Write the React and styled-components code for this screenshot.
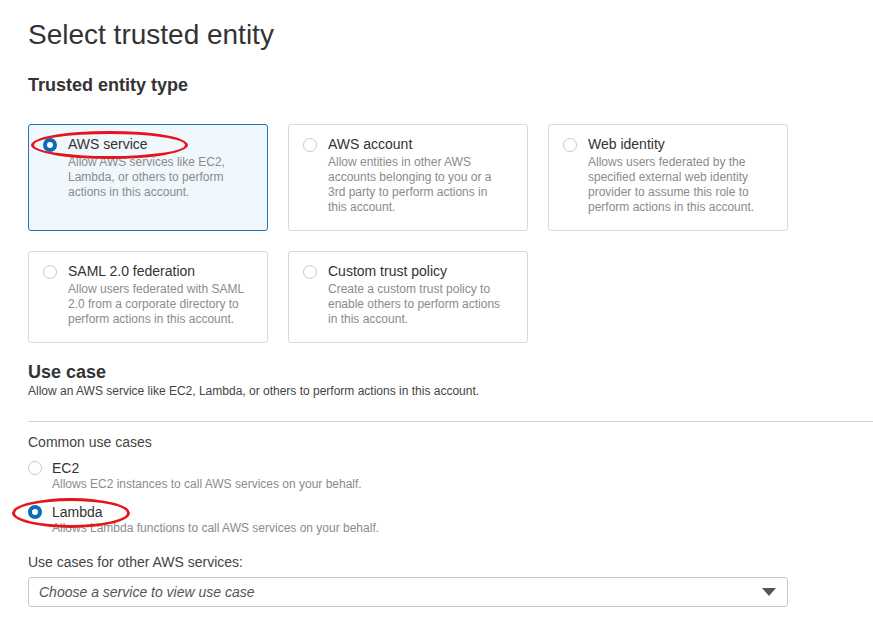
import React from "react";
import styled, { createGlobalStyle } from "styled-components";

const GlobalStyle = createGlobalStyle`
  body {
    margin: 0;
    background: #fff;
    font-family: "Liberation Sans", Arial, sans-serif;
    color: #333;
  }
  * { box-sizing: border-box; }
`;

const entityTypes = [
  {
    title: "AWS service",
    desc: "Allow AWS services like EC2, Lambda, or others to perform actions in this account.",
    checked: true,
    circled: true
  },
  {
    title: "AWS account",
    desc: "Allow entities in other AWS accounts belonging to you or a 3rd party to perform actions in this account."
  },
  {
    title: "Web identity",
    desc: "Allows users federated by the specified external web identity provider to assume this role to perform actions in this account."
  },
  {
    title: "SAML 2.0 federation",
    desc: "Allow users federated with SAML 2.0 from a corporate directory to perform actions in this account."
  },
  {
    title: "Custom trust policy",
    desc: "Create a custom trust policy to enable others to perform actions in this account."
  }
];

const useCases = [
  { title: "EC2", desc: "Allows EC2 instances to call AWS services on your behalf." },
  {
    title: "Lambda",
    desc: "Allows Lambda functions to call AWS services on your behalf.",
    checked: true,
    circled: true
  }
];

function App() {
  return (
    <>
      <GlobalStyle />
      <Page>
        <Title>Select trusted entity</Title>
        <Heading $top={23}>Trusted entity type</Heading>
        <TileGrid>
          {entityTypes.map(t => (
            <Tile key={t.title} $selected={t.checked}>
              <Radio $checked={t.checked} $top={3} />
              <div>
                <TileTitle>{t.title}</TileTitle>
                <TileDesc>{t.desc}</TileDesc>
              </div>
              {t.circled && <Circle $left={2} $top={6} $w={157} $h={28} />}
            </Tile>
          ))}
        </TileGrid>

        <Heading $top={19}>Use case</Heading>
        <Lead>Allow an AWS service like EC2, Lambda, or others to perform actions in this account.</Lead>
        <Divider />

        <Label $top={11}>Common use cases</Label>
        <OptionList>
          {useCases.map(u => (
            <Option key={u.title}>
              <Radio $checked={u.checked} $top={1} />
              <div>
                <OptionTitle>{u.title}</OptionTitle>
                <OptionDesc>{u.desc}</OptionDesc>
              </div>
              {u.circled && <Circle $left={-16} $top={-6} $w={118} $h={30} />}
            </Option>
          ))}
        </OptionList>

        <Label $top={17}>Use cases for other AWS services:</Label>
        <Select>
          <Placeholder>Choose a service to view use case</Placeholder>
          <Caret />
        </Select>
      </Page>
    </>
  );
}

const Page = styled.div`
  padding: 18px 0 40px 28px;
`;

const Title = styled.h1`
  margin: 0;
  font-size: 28px;
  line-height: 34px;
  font-weight: 400;
  color: #333;
`;

const Heading = styled.h2`
  margin: ${props => props.$top}px 0 0;
  font-size: 18px;
  line-height: 20px;
  font-weight: 700;
  color: #333;
`;

const TileGrid = styled.div`
  display: grid;
  grid-template-columns: repeat(3, 240px);
  gap: 20px;
  margin-top: 29px;
`;

const Tile = styled.div`
  position: relative;
  display: flex;
  align-items: flex-start;
  gap: 11px;
  padding: 10px 20px 15px 14px;
  border: 1px solid ${props => (props.$selected ? "#1f74b6" : "#d5dbdb")};
  border-radius: 3px;
  background: ${props => (props.$selected ? "#f1f8fd" : "#fff")};
`;

const Radio = styled.span`
  flex: none;
  width: 14px;
  height: 14px;
  margin-top: ${props => props.$top}px;
  border-radius: 50%;
  background: #fff;
  border: ${props => (props.$checked ? "4px solid #0a6db5" : "1px solid #c6cbcc")};
`;

const TileTitle = styled.div`
  font-size: 14px;
  line-height: 18px;
  color: #333;
`;

const TileDesc = styled.div`
  margin-top: 2px;
  font-size: 12px;
  line-height: 15px;
  color: #8b8b8b;
`;

const Circle = styled.span`
  position: absolute;
  left: ${props => props.$left}px;
  top: ${props => props.$top}px;
  width: ${props => props.$w}px;
  height: ${props => props.$h}px;
  border: 3px solid #e3161c;
  border-radius: 50%;
  pointer-events: none;
`;

const Lead = styled.p`
  margin: 2px 0 0;
  font-size: 12px;
  line-height: 14px;
  color: #444;
`;

const Divider = styled.hr`
  margin: 23px 0 0;
  border: 0;
  border-top: 1px solid #cfd3d3;
`;

const Label = styled.div`
  margin-top: ${props => props.$top}px;
  font-size: 14px;
  line-height: 18px;
  color: #444;
`;

const OptionList = styled.div`
  display: flex;
  flex-direction: column;
  gap: 12px;
  margin-top: 9px;
`;

const Option = styled.div`
  position: relative;
  display: flex;
  align-items: flex-start;
  gap: 10px;
`;

const OptionTitle = styled.div`
  font-size: 14px;
  line-height: 16px;
  color: #333;
`;

const OptionDesc = styled.div`
  margin-top: 1px;
  font-size: 12px;
  line-height: 15px;
  color: #8b8b8b;
`;

const Select = styled.div`
  display: flex;
  align-items: center;
  justify-content: space-between;
  width: 760px;
  height: 30px;
  margin-top: 6px;
  padding: 0 11px 0 10px;
  border: 1px solid #c3c8c9;
  border-radius: 3px;
  background: #fff;
`;

const Placeholder = styled.span`
  font-size: 14px;
  font-style: italic;
  color: #555;
`;

const Caret = styled.span`
  width: 0;
  height: 0;
  border-left: 7px solid transparent;
  border-right: 7px solid transparent;
  border-top: 8px solid #555;
`;

export default App;
